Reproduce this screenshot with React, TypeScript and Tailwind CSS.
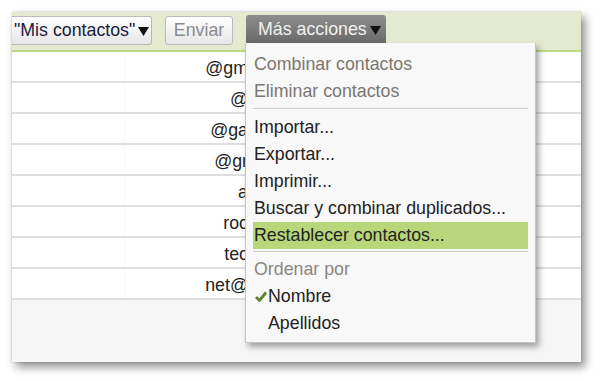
import { Fragment } from "react";

const rows = ["@gm", "@", "@ga", "@gr", "a", "roc", "tec", "net@"];

function Caret({ className = "" }: { className?: string }) {
	return (
		<svg width="11" height="9" viewBox="0 0 11 9" className={className}>
			<polygon points="0,0 11,0 5.5,9" fill="#111" />
		</svg>
	);
}

function Check() {
	return (
		<svg width="12" height="11" viewBox="0 0 12 11" className="absolute left-[2px] top-[8px]">
			<path d="M1 6 L4.5 9.5 L11 1.5" fill="none" stroke="#5f8330" strokeWidth="2.8" strokeLinejoin="round" />
		</svg>
	);
}

type Item = { label: string; kind: "muted" | "normal" | "active" | "heading" | "checked" | "indent" } | "sep";

const menu: Item[] = [
	{ label: "Combinar contactos", kind: "muted" },
	{ label: "Eliminar contactos", kind: "muted" },
	"sep",
	{ label: "Importar...", kind: "normal" },
	{ label: "Exportar...", kind: "normal" },
	{ label: "Imprimir...", kind: "normal" },
	{ label: "Buscar y combinar duplicados...", kind: "normal" },
	{ label: "Restablecer contactos...", kind: "active" },
	"sep",
	{ label: "Ordenar por", kind: "heading" },
	{ label: "Nombre", kind: "checked" },
	{ label: "Apellidos", kind: "indent" },
];

export default function App() {
	let sepCount = 0;
	return (
		<div className="w-[600px] h-[381px] bg-white pt-3 pl-3 font-['Liberation_Sans',Arial,sans-serif] text-[17.8px] overflow-hidden">
			<div className="relative w-[569px] h-[350px] bg-[#f6f6f6] shadow-[4px_5px_9px_rgba(0,0,0,0.45),0_0_2px_rgba(0,0,0,0.2)]">
				{/* toolbar */}
				<div className="h-[40px] bg-[#e4eacf] border-b-2 border-[#bcd98a] flex items-start">
					<button className="mt-[4px] h-[29px] w-[140px] flex items-center pl-[2px] gap-[3px] rounded-r-[3px] border border-l-0 border-[#b9b9b9] bg-gradient-to-b from-white to-[#e6e6e6] text-[#1c1c3c] leading-[27px]">
						<span>"Mis contactos"</span>
						<Caret className="mt-[2px]" />
					</button>
					<button className="mt-[4px] ml-[13px] h-[29px] w-[68px] rounded-[3px] border border-[#b9b9b9] bg-gradient-to-b from-white to-[#e6e6e6] text-[#8a8a8a] leading-[27px]">
						Enviar
					</button>
					<button className="mt-[3px] ml-[13px] h-[28px] w-[140px] flex items-center pl-[12px] gap-[3px] rounded-t-[3px] bg-gradient-to-b from-[#8e8e8e] to-[#6a6a6a] text-[#f2f2f2] leading-[27px]">
						<span>Más acciones</span>
						<Caret className="mt-[3px]" />
					</button>
				</div>

				{/* contact rows */}
				{rows.map((r, i) => (
					<div key={i} className="h-[31px] bg-white border-b-2 border-[#dedede] flex text-[#222]">
						<div className="w-[113px] border-r border-[#f7f7f7]" />
						<div className="w-[123px] text-right leading-[31px] pt-[1px]">{r}</div>
					</div>
				))}

				{/* dropdown menu */}
				<div className="absolute left-[233px] top-[31px] w-[291px] bg-[#f8f8f8] border border-[#c4c4c4] border-t-0 px-[7px] pt-[8px] pb-[5px] shadow-[3px_4px_6px_rgba(0,0,0,0.35)]">
					{menu.map((it, i) => {
						if (it === "sep") {
							sepCount++;
							return (
								<div
									key={i}
									className={
										sepCount === 1
											? "mt-[3px] mb-[4px] h-[2px] border-t border-[#c6c6c6] border-b border-b-white"
											: "mt-[2px] mb-[3px] h-[2px] border-t border-[#c6c6c6] border-b border-b-white"
									}
								/>
							);
						}
						const base = "relative h-[27px] leading-[27px] whitespace-nowrap";
						if (it.kind === "muted")
							return <div key={i} className={`${base} pl-[1px] text-[#7b7771]`}>{it.label}</div>;
						if (it.kind === "heading")
							return <div key={i} className={`${base} pl-[1px] text-[#8a8682]`}>{it.label}</div>;
						if (it.kind === "active")
							return <div key={i} className={`${base} pl-[1px] bg-[#b8d67a] text-[#222]`}>{it.label}</div>;
						if (it.kind === "checked")
							return (
								<div key={i} className={`${base} pl-[15px] text-[#222]`}>
									<Check />
									{it.label}
								</div>
							);
						if (it.kind === "indent")
							return <div key={i} className={`${base} pl-[15px] text-[#222]`}>{it.label}</div>;
						return <Fragment key={i}><div className={`${base} pl-[1px] text-[#222]`}>{it.label}</div></Fragment>;
					})}
				</div>
			</div>
		</div>
	);
}
